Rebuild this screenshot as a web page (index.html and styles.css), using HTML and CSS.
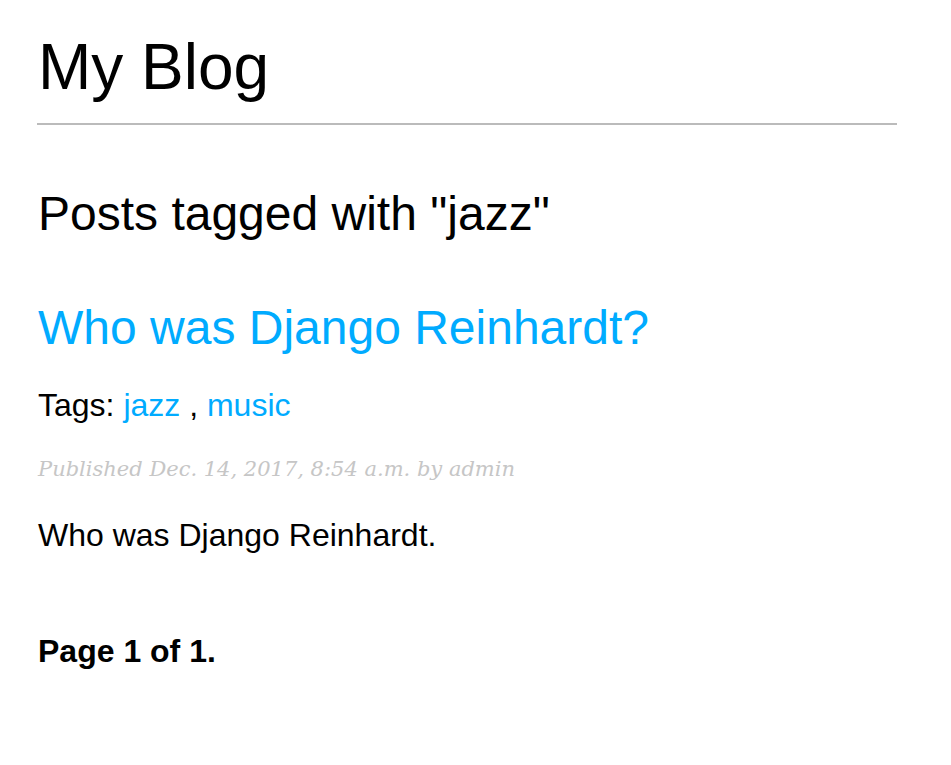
FILE: index.html
```html
<!DOCTYPE html>
<html>
<head>
<meta charset="utf-8">
<title>My Blog</title>
<link rel="stylesheet" href="styles.css">
</head>
<body>
<div class="page">
  <header class="site-header">
    <h1 class="site-title">My Blog</h1>
  </header>
  <main class="content">
    <h2 class="tag-heading">Posts tagged with "jazz"</h2>
    <article class="post">
      <h2 class="post-title"><a href="#">Who was Django Reinhardt?</a></h2>
      <p class="tags">Tags: <a href="#">jazz</a> , <a href="#">music</a></p>
      <p class="date">Published Dec. 14, 2017, 8:54 a.m. by admin</p>
      <p class="body">Who was Django Reinhardt.</p>
    </article>
    <div class="pagination">Page 1 of 1.</div>
  </main>
</div>
</body>
</html>
```
FILE: styles.css
```css
html, body {
  margin: 0;
  padding: 0;
  background: #fff;
}
body {
  font-family: "Liberation Sans", Arial, sans-serif;
  color: #000;
}
.page {
  width: 860px;
  padding-left: 37px;
}
a {
  color: #00abff;
  text-decoration: none;
}
.site-header {
  padding-top: 29px;
  padding-bottom: 17px;
  border-bottom: 2px solid #bbb;
  padding-left: 1px;
}
.site-title {
  margin: 0;
  font-size: 64px;
  font-weight: normal;
  line-height: 1.2;
}
.content {
  padding-left: 1px;
}
.tag-heading {
  margin: 60px 0 0;
  font-size: 48px;
  font-weight: normal;
  line-height: 1.2;
}
.post-title {
  margin: 57px 0 0;
  font-size: 48px;
  font-weight: normal;
  line-height: 1.2;
}
.tags {
  margin: 29px 0 0;
  font-size: 32px;
  line-height: 1.2;
}
.date {
  margin: 33px 0 0;
  font-family: "DejaVu Serif", Georgia, serif;
  font-style: italic;
  font-size: 21px;
  line-height: 1.2;
  color: #c6c6c6;
}
.body {
  margin: 33px 0 0;
  font-size: 32px;
  line-height: 1.2;
}
.pagination {
  margin: 78px 0 0;
  font-size: 32px;
  font-weight: bold;
  line-height: 1.2;
}
```
